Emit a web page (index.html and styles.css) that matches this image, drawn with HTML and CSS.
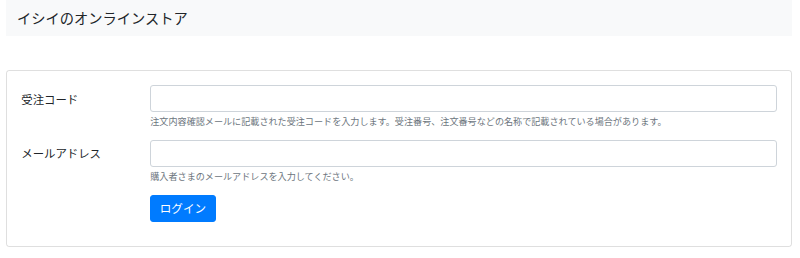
FILE: index.html
```html
<!DOCTYPE html>
<html lang="ja">
<head>
<meta charset="utf-8">
<title>イシイのオンラインストア</title>
<link rel="stylesheet" href="styles.css">
</head>
<body>
  <div class="page">
    <div class="header">
      <h5 class="header-title">イシイのオンラインストア</h5>
    </div>
    <div class="card">
      <form class="card-body">
        <div class="form-row">
          <label class="form-label" for="order">受注コード</label>
          <div class="form-field">
            <input class="form-control" id="order" type="text">
            <small class="form-text">注文内容確認メールに記載された受注コードを入力します。受注番号、注文番号などの名称で記載されている場合があります。</small>
          </div>
        </div>
        <div class="form-row">
          <label class="form-label" for="mail">メールアドレス</label>
          <div class="form-field">
            <input class="form-control" id="mail" type="email">
            <small class="form-text">購入者さまのメールアドレスを入力してください。</small>
          </div>
        </div>
        <div class="form-row form-row-last">
          <div></div>
          <div class="form-field">
            <button class="btn" type="button">ログイン</button>
          </div>
        </div>
      </form>
    </div>
  </div>
</body>
</html>
```

FILE: styles.css
```css
html, body {
    margin: 0;
    padding: 0;
    background: #ffffff;
    color: #212529;
    font-family: "Noto Sans CJK JP", "Noto Sans", sans-serif;
    font-size: 11.4px;
    line-height: 1.5;
}
.page {
    padding: 0 8px 0 6px;
}
.header {
    background: #f8f9fa;
    height: 36px;
    display: flex;
    align-items: center;
    padding: 0 11px;
}
.header-title {
    margin: 0;
    font-size: 14.25px;
    font-weight: 400;
    line-height: 1.2;
}
.card {
    margin-top: 34px;
    border: 1px solid rgba(0,0,0,.125);
    border-radius: 3px;
}
.card-body {
    margin: 0;
    padding: 14.25px;
}
.form-row {
    display: grid;
    grid-template-columns: 129px 1fr;
    margin-bottom: 11.4px;
}
.form-row-last {
    margin-bottom: 10px;
}
.form-label {
    padding-top: 5.3px;
    line-height: 1.5;
}
.form-field {
    display: flex;
    flex-direction: column;
    align-items: flex-start;
}
.form-control {
    box-sizing: border-box;
    width: 100%;
    height: 27px;
    margin: 0;
    padding: 4.3px 8.5px;
    border: 1px solid #ced4da;
    border-radius: 3px;
    font: inherit;
    color: #495057;
    background: #fff;
}
.form-text {
    margin-top: 2.85px;
    font-size: 9.1px;
    line-height: 1.5;
    color: #6c757d;
}
.btn {
    box-sizing: border-box;
    height: 27px;
    padding: 0 8.5px;
    border: 1px solid #007bff;
    border-radius: 3px;
    background: #007bff;
    color: #ffffff;
    font: inherit;
    font-size: 11.6px;
    line-height: 1;
}
```
